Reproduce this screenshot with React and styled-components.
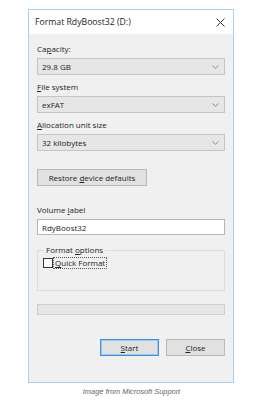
import styled, { createGlobalStyle } from 'styled-components'

const Global = createGlobalStyle`
  body {
    margin: 0;
    background: #fff;
    font-family: "Open Sans", "Noto Sans", "Liberation Sans", sans-serif;
  }
`

const Page = styled.div`
  width: 263px;
  height: 400px;
  padding-top: 9px;
  box-sizing: border-box;
`

const Window = styled.div`
  width: 206px;
  margin-left: 28px;
  border: 1px solid #a9d1f2;
  background: #f0f0f0;
  box-sizing: border-box;
  height: 374px;
  display: flex;
  flex-direction: column;
`

const TitleBar = styled.div`
  height: 24px;
  background: #fff;
  display: flex;
  align-items: center;
  justify-content: space-between;
  padding: 0 8px 0 6px;
  font-size: 8.7px;
  color: #1a1a1a;
`

const Body = styled.div`
  padding: 0 8px;
  display: flex;
  flex-direction: column;
  flex: 1;
`

const Label = styled.div`
  font-size: 8px;
  color: #222;
  height: 12px;
  line-height: 12px;
  margin-top: ${p => p.$top}px;
  margin-bottom: 3px;
  u { text-decoration: underline; text-underline-offset: 1px; }
`

const SelectBox = styled.div`
  height: 17px;
  box-sizing: border-box;
  border: 1px solid #c4c4c4;
  background: #e6e6e6;
  display: flex;
  align-items: center;
  justify-content: space-between;
  padding: 0 5px 0 4px;
  font-size: 8px;
  color: #222;
`

const Input = styled.div`
  height: 16px;
  box-sizing: border-box;
  border: 1px solid #b5b5b5;
  background: #fff;
  display: flex;
  align-items: center;
  padding: 0 4px;
  font-size: 8px;
  color: #222;
`

const Button = styled.div`
  height: 17px;
  box-sizing: border-box;
  width: ${p => p.$w}px;
  border: 1px solid ${p => (p.$focus ? '#3c8ee0' : '#b9b9b9')};
  box-shadow: ${p => (p.$focus ? 'inset 0 0 0 1px #9fc8f0' : 'none')};
  background: #e1e1e1;
  display: flex;
  align-items: center;
  justify-content: center;
  font-size: 8px;
  color: #222;
  margin-top: ${p => p.$top || 0}px;
  u { text-decoration: underline; text-underline-offset: 1px; }
`

const Group = styled.fieldset`
  margin: 10px 0 0;
  padding: 0 5px;
  height: 46px;
  box-sizing: border-box;
  border: 1px solid #dcdcdc;
  font-size: 8px;
  color: #222;
  legend {
    padding: 0 2px;
    margin-left: 1px;
    line-height: 10px;
  }
  u { text-decoration: underline; text-underline-offset: 1px; }
`

const CheckRow = styled.div`
  display: flex;
  align-items: center;
  gap: 1px;
  margin-top: 3px;
`

const Check = styled.span`
  width: 10px;
  height: 10px;
  box-sizing: border-box;
  border: 1px solid #333;
  background: #fff;
`

const FocusText = styled.span`
  outline: 1px dotted #555;
  padding: 0 1px;
  line-height: 10px;
`

const Progress = styled.div`
  height: 11px;
  box-sizing: border-box;
  border: 1px solid #cfcfcf;
  background: #e6e6e6;
  margin-top: 13px;
`

const Actions = styled.div`
  display: flex;
  justify-content: flex-end;
  gap: 7px;
  margin-top: 24px;
`

const Caption = styled.div`
  text-align: center;
  font-family: "Liberation Sans", Arial, sans-serif;
  font-style: italic;
  font-size: 7.4px;
  color: #666;
  margin-top: 4px;
`

const Chevron = () => (
  <svg width="7" height="4" viewBox="0 0 7 4">
    <path d="M0.5 0.5 L3.5 3.3 L6.5 0.5" fill="none" stroke="#8a8a8a" strokeWidth="1" />
  </svg>
)

const CloseX = () => (
  <svg width="9" height="9" viewBox="0 0 9 9">
    <path d="M0.5 0.5 L8.5 8.5 M8.5 0.5 L0.5 8.5" stroke="#333" strokeWidth="1" />
  </svg>
)

const Select = ({ value }) => (
  <SelectBox>
    <span>{value}</span>
    <Chevron />
  </SelectBox>
)

export default function App() {
  return (
    <Page>
      <Global />
      <Window>
        <TitleBar>
          <span>Format RdyBoost32 (D:)</span>
          <CloseX />
        </TitleBar>
        <Body>
          <Label $top={9}>Ca<u>p</u>acity:</Label>
          <Select value="29.8 GB" />
          <Label $top={6}><u>F</u>ile system</Label>
          <Select value="exFAT" />
          <Label $top={6}><u>A</u>llocation unit size</Label>
          <Select value="32 kilobytes" />
          <Button $w={110} $top={18}><span>Restore <u>d</u>evice defaults</span></Button>
          <Label $top={18}>Volume <u>l</u>abel</Label>
          <Input>RdyBoost32</Input>
          <Group>
            <legend>Format <u>o</u>ptions</legend>
            <CheckRow>
              <Check />
              <FocusText><u>Q</u>uick Format</FocusText>
            </CheckRow>
          </Group>
          <Progress />
          <Actions>
            <Button $w={59} $focus><span><u>S</u>tart</span></Button>
            <Button $w={59}><span><u>C</u>lose</span></Button>
          </Actions>
        </Body>
      </Window>
      <Caption>Image from Microsoft Support</Caption>
    </Page>
  )
}
